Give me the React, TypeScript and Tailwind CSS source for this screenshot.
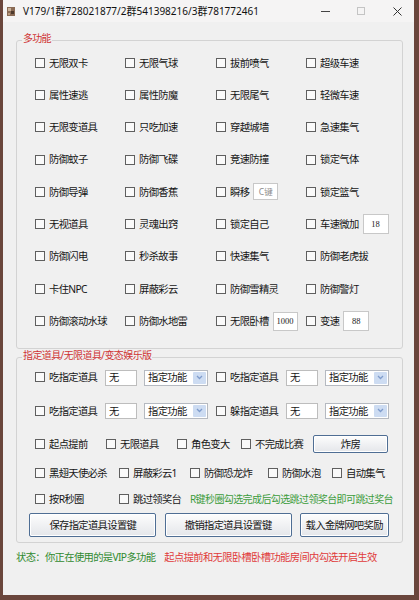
import React from "react";

const CB = () => (
  <span className="block w-[10px] h-[10px] shrink-0 border border-[#5f5f5f] bg-[#fafafa]" />
);

function Check({
  label,
  w,
  children,
}: {
  label: string;
  w?: string;
  children?: React.ReactNode;
}) {
  return (
    <div className={`flex items-center ${w ?? ""}`}>
      <CB />
      <span className="ml-[4px] whitespace-nowrap leading-none">{label}</span>
      {children}
    </div>
  );
}

function Box({ text, w, h, cls }: { text: string; w: string; h: string; cls?: string }) {
  return (
    <span
      className={`ml-[4px] flex items-center justify-center bg-white border border-[#c8c8c8] text-[8.5px] tracking-normal leading-none ${w} ${h} ${cls ?? ""}`}
    >
      {text}
    </span>
  );
}

function TextIn() {
  return (
    <span className="flex items-center w-[32px] h-[16px] bg-white border border-[#bdbdbd] pl-[3px] leading-none">
      无
    </span>
  );
}

function Sel() {
  return (
    <span className="flex items-center justify-between w-[64px] h-[16px] bg-white border border-[#b5b9c0] pl-[3px] pr-[1px] leading-none">
      <span>指定功能</span>
      <span className="flex items-center justify-center w-[13px] h-[12px] bg-[#cddcf2] rounded-[1px]">
        <svg width="7" height="5" viewBox="0 0 7 5">
          <path d="M1 1 L3.5 3.5 L6 1" fill="none" stroke="#7f9ccc" strokeWidth="1.3" />
        </svg>
      </span>
    </span>
  );
}

function Btn({ label, w, h }: { label: string; w: string; h: string }) {
  return (
    <div
      className={`flex items-center justify-center ${w} ${h} border border-[#4f6e94] rounded-[2px] bg-gradient-to-b from-[#fdfdfd] to-[#e4e6ea] shadow-[inset_0_0_0_1px_#ffffff] leading-none`}
    >
      {label}
    </div>
  );
}

type Cell = { l: string; extra?: React.ReactNode };

const rows: Cell[][] = [
  [{ l: "无限双卡" }, { l: "无限气球" }, { l: "拔前喷气" }, { l: "超级车速" }],
  [{ l: "属性速逃" }, { l: "属性防魔" }, { l: "无限尾气" }, { l: "轻微车速" }],
  [{ l: "无限变道具" }, { l: "只吃加速" }, { l: "穿越城墙" }, { l: "急速集气" }],
  [{ l: "防御蚊子" }, { l: "防御飞碟" }, { l: "竞速防撞" }, { l: "锁定气体" }],
  [
    { l: "防御导弹" },
    { l: "防御香蕉" },
    { l: "瞬移", extra: <Box text="C键" w="w-[25px]" h="h-[17px]" cls="text-[#8a8a8a]" /> },
    { l: "锁定篮气" },
  ],
  [
    { l: "无视道具" },
    { l: "灵魂出窍" },
    { l: "锁定自己" },
    {
      l: "车速微加",
      extra: <Box text="18" w="w-[26px]" h="h-[20px]" cls="font-['Liberation_Serif',serif] text-[#222]" />,
    },
  ],
  [{ l: "防御闪电" }, { l: "秒杀故事" }, { l: "快速集气" }, { l: "防御老虎拔" }],
  [{ l: "卡住NPC" }, { l: "屏蔽彩云" }, { l: "防御雪精灵" }, { l: "防御警灯" }],
  [
    { l: "防御滚动水球" },
    { l: "防御水地雷" },
    {
      l: "无限卧槽",
      extra: <Box text="1000" w="w-[25px]" h="h-[19px]" cls="font-['Liberation_Serif',serif] text-[#222]" />,
    },
    {
      l: "变速",
      extra: <Box text="88" w="w-[26px]" h="h-[20px]" cls="font-['Liberation_Serif',serif] text-[#222]" />,
    },
  ],
];

export default function App() {
  return (
    <div className="w-[419px] h-[600px] bg-[#6a463c] flex font-['Noto_Sans','Noto_Sans_CJK_SC',sans-serif] text-[10.3px] tracking-[-0.65px] text-[#161616] overflow-hidden">
      <div className="ml-[3px] w-[411px] h-[595px] bg-[#f0f0f0] flex flex-col">
        {/* title bar */}
        <div className="h-[22px] shrink-0 flex items-center bg-[#f5f4f4] pl-[3px] tracking-normal">
          <svg width="10" height="11" viewBox="0 0 10 11" className="shrink-0">
            <rect x="1" y="1" width="8" height="9" fill="#8a6b55" />
            <rect x="2" y="2" width="3" height="3" fill="#c9b39a" />
            <rect x="5" y="5" width="3" height="3" fill="#4e3a2c" />
            <rect x="2" y="7" width="2" height="2" fill="#b89a7e" />
          </svg>
          <span className="ml-[7px] text-[10px] text-[#111] leading-none whitespace-nowrap">
            V179/1群728021877/2群541398216/3群781772461
          </span>
          <div className="ml-auto flex items-center mr-[12px]">
            <span className="block w-[9px] h-[1px] bg-[#444]" />
            <span className="ml-[27px] block w-[8px] h-[8px] border border-[#c4c4c4]" />
            <svg width="9" height="9" viewBox="0 0 9 9" className="ml-[28px]">
              <path d="M0.5 0.5 L8.5 8.5 M8.5 0.5 L0.5 8.5" stroke="#333" strokeWidth="1" />
            </svg>
          </div>
        </div>

        {/* group 1 */}
        <div className="relative ml-[13px] mt-[18px] w-[387px] h-[309px] border border-[#d3d3d3] rounded-[3px] pl-[18px] pt-[5.5px]">
          <span className="absolute left-[5px] top-[-8px] px-[1px] bg-[#f0f0f0] text-[#cf3434] leading-none text-[10px] tracking-[-0.7px]">
            多功能
          </span>
          <div className="grid grid-cols-[90px_91px_90px_1fr] auto-rows-[32.3px] items-center">
            {rows.flat().map((c, i) => (
              <Check key={i} label={c.l}>
                {c.extra}
              </Check>
            ))}
          </div>
        </div>

        {/* group 2 */}
        <div className="relative ml-[13px] mt-[8px] w-[387px] h-[186px] border border-[#d3d3d3] rounded-[3px] pl-[18px] pt-[9.5px] flex flex-col">
          <span className="absolute left-[5px] top-[-8px] px-[1px] bg-[#f0f0f0] text-[#cf3434] leading-none text-[10px] tracking-[-0.6px] whitespace-nowrap">
            指定道具/无限道具/变态娱乐版
          </span>
          <div className="flex items-center h-[20px]">
            <Check label="吃指定道具" w="w-[70px]" />
            <TextIn />
            <span className="ml-[7px]">
              <Sel />
            </span>
            <span className="ml-[8px]">
              <Check label="吃指定道具" w="w-[70px]" />
            </span>
            <TextIn />
            <span className="ml-[7px]">
              <Sel />
            </span>
          </div>
          <div className="flex items-center h-[20px] mt-[13.4px]">
            <Check label="吃指定道具" w="w-[70px]" />
            <TextIn />
            <span className="ml-[7px]">
              <Sel />
            </span>
            <span className="ml-[8px]">
              <Check label="躲指定道具" w="w-[70px]" />
            </span>
            <TextIn />
            <span className="ml-[7px]">
              <Sel />
            </span>
          </div>
          <div className="flex items-center h-[20px] mt-[13.3px]">
            <Check label="起点提前" w="w-[71px]" />
            <Check label="无限道具" w="w-[71px]" />
            <Check label="角色变大" w="w-[64px]" />
            <Check label="不完成比赛" w="w-[72px]" />
            <Btn label="炸房" w="w-[75px]" h="h-[18px]" />
          </div>
          <div className="flex items-center h-[20px] mt-[8.7px]">
            <Check label="黑翅天使必杀" w="w-[84px]" />
            <Check label="屏蔽彩云1" w="w-[71px]" />
            <Check label="防御恐龙炸" w="w-[78px]" />
            <Check label="防御水泡" w="w-[64px]" />
            <Check label="自动集气" />
          </div>
          <div className="flex items-center h-[20px] mt-[6.6px]">
            <Check label="按R秒圈" w="w-[84px]" />
            <Check label="跳过领奖台" w="w-[71px]" />
            <span className="text-[10px] tracking-[-0.6px] text-[#3c9c3c] whitespace-nowrap leading-none">
              R键秒圈勾选完成后勾选跳过领奖台即可跳过奖台
            </span>
          </div>
          <div className="flex items-center mt-[4px] -ml-[5.7px]">
            <Btn label="保存指定道具设置键" w="w-[127px]" h="h-[23.4px]" />
            <span className="ml-[8.4px]">
              <Btn label="撤销指定道具设置键" w="w-[127px]" h="h-[23.4px]" />
            </span>
            <span className="ml-[8px]">
              <Btn label="载入金牌网吧奖励" w="w-[89px]" h="h-[23.4px]" />
            </span>
          </div>
        </div>

        {/* status */}
        <div className="ml-[13px] mt-[9px] flex items-center leading-none whitespace-nowrap">
          <span className="text-[#2f8a2f]">状态：你正在使用的是VIP多功能</span>
          <span className="ml-[9px] text-[#e03a3a]">起点提前和无限卧槽卧槽功能房间内勾选开启生效</span>
        </div>
      </div>
    </div>
  );
}
